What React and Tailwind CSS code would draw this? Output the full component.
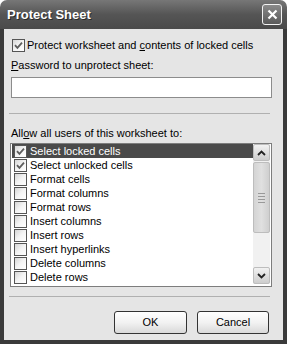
import React from "react";

const items = [
  { label: "Select locked cells", checked: true, selected: true },
  { label: "Select unlocked cells", checked: true },
  { label: "Format cells" },
  { label: "Format columns" },
  { label: "Format rows" },
  { label: "Insert columns" },
  { label: "Insert rows" },
  { label: "Insert hyperlinks" },
  { label: "Delete columns" },
  { label: "Delete rows" },
];

function Box({ checked }) {
  return (
    <span className="flex h-[13px] w-[13px] shrink-0 items-center justify-center border border-[#555] bg-gradient-to-br from-[#d6d6d6] via-[#f4f4f4] to-white">
      {checked && (
        <svg width="9" height="9" viewBox="0 0 9 9">
          <path d="M1 4.2 L3.4 6.8 L8 1.6" stroke="#5e5e5e" strokeWidth="1.8" fill="none" />
        </svg>
      )}
    </span>
  );
}

function Chevron({ up }) {
  return (
    <svg width="9" height="6" viewBox="0 0 9 6">
      <path d={up ? "M1 5 L4.5 1.5 L8 5" : "M1 1 L4.5 4.5 L8 1"} stroke="#222" strokeWidth="1.8" fill="none" />
    </svg>
  );
}

export default function App() {
  return (
    <div className="h-[344px] w-[287px] bg-white font-['Liberation_Sans',Arial,sans-serif] text-[11px] leading-[13px] text-black">
      <div className="flex h-full flex-col overflow-hidden rounded-t-[7px]">
        {/* title bar */}
        <div className="flex h-[29px] shrink-0 items-center justify-between bg-gradient-to-b from-[#777] via-[#555] to-[#4a4a4a] pl-[7px] pr-[5px]">
          <span className="text-[13px] font-bold text-white [text-shadow:1px_1px_0_#2a2a2a]">Protect Sheet</span>
          <button className="flex h-[21px] w-[20px] items-center justify-center rounded-[3px] border border-[#f2f2f2] bg-gradient-to-b from-[#8a8a8a] to-[#5a5a5a]">
            <svg width="11" height="11" viewBox="0 0 11 11">
              <path d="M1.5 1.5 L9.5 9.5 M9.5 1.5 L1.5 9.5" stroke="white" strokeWidth="2.2" />
            </svg>
          </button>
        </div>

        {/* frame + body */}
        <div className="flex flex-1 bg-[#3a3a3a] px-[4px] pb-[4px]">
          <div className="flex flex-1 flex-col bg-[#e5e5e5] pl-[7px] pr-[11px]">
            <label className="mt-[10px] flex h-[13px] items-center gap-[2px] pl-[1px]">
              <Box checked />
              <span>
                Protect worksheet and <span className="underline">c</span>ontents of locked cells
              </span>
            </label>

            <div className="mt-[7px]">
              <span className="underline">P</span>assword to unprotect sheet:
            </div>
            <div className="mt-[5px] h-[21px] w-[261px] border border-[#8c8c8c] bg-white" />

            <div className="-ml-[2px] mt-[15px] h-[2px] w-[261px] border-t border-[#b0b0b0] border-b-white" />

            <div className="mt-[12px]">
              All<span className="underline">o</span>w all users of this worksheet to:
            </div>

            <div className="-ml-[1px] mt-[3px] flex h-[144px] w-[262px] border border-[#7d7d7d] bg-white">
              <div className="flex flex-1 flex-col pl-[1px]">
                {items.map((it) => (
                  <div
                    key={it.label}
                    className={
                      "flex h-[14px] w-[241px] items-center gap-[3px] pl-[2px] " +
                      (it.selected ? "bg-[#4a4a4a] text-white" : "")
                    }
                  >
                    <Box checked={it.checked} />
                    <span>{it.label}</span>
                  </div>
                ))}
              </div>
              <div className="mr-[1px] flex h-[140px] w-[17px] flex-col bg-[#f1f1f1]">
                <div className="flex h-[17px] items-center justify-center rounded-[2px] border border-[#bdbdbd] bg-gradient-to-b from-[#f2f2f2] to-[#cdcdcd]">
                  <Chevron up />
                </div>
                <div className="flex flex-1 flex-col pt-[1px]">
                  <div className="flex h-[71px] flex-col items-center justify-center gap-[2px] rounded-[2px] border border-[#bdbdbd] bg-gradient-to-r from-[#d4d4d4] via-[#e0e0e0] to-[#cfcfcf]">
                    <span className="h-px w-[7px] bg-[#999]" />
                    <span className="h-px w-[7px] bg-[#999]" />
                    <span className="h-px w-[7px] bg-[#999]" />
                    <span className="h-px w-[7px] bg-[#999]" />
                  </div>
                </div>
                <div className="flex h-[17px] items-center justify-center rounded-[2px] border border-[#bdbdbd] bg-gradient-to-b from-[#f2f2f2] to-[#cdcdcd]">
                  <Chevron />
                </div>
              </div>
            </div>

            <div className="-ml-[2px] mt-[9px] h-[2px] w-[261px] border-t border-[#b0b0b0] border-b-white" />

            <div className="mt-[13px] flex justify-end gap-[10px] pr-[3px]">
              <button className="flex h-[23px] w-[73px] items-center justify-center rounded-[3px] border border-[#333] bg-gradient-to-b from-white via-[#f2f2f2] to-[#d9d9d9]">
                OK
              </button>
              <button className="flex h-[23px] w-[72px] items-center justify-center rounded-[3px] border border-[#333] bg-gradient-to-b from-white via-[#f2f2f2] to-[#d9d9d9]">
                Cancel
              </button>
            </div>
          </div>
        </div>
      </div>
    </div>
  );
}
